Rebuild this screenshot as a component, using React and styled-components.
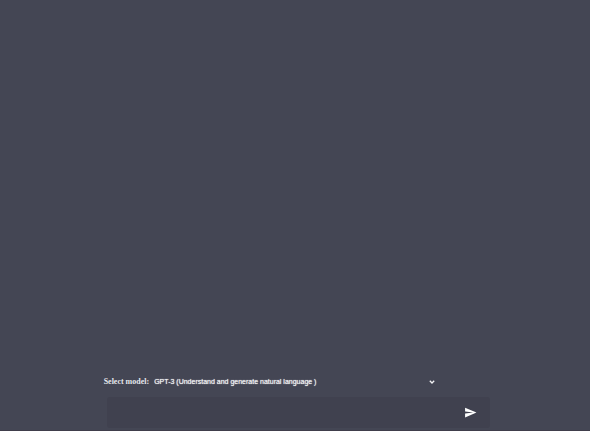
import React, { useState } from "react";
import styled, { createGlobalStyle } from "styled-components";

const GlobalStyle = createGlobalStyle`
  *, *::before, *::after { box-sizing: border-box; }
  body { margin: 0; background: #444654; }
`;

const Page = styled.main`
  display: flex;
  flex-direction: column;
  justify-content: flex-end;
  min-height: 100vh;
  padding-left: 4px;
  border-bottom: 1px solid #403e4b;
  background: #444654;
  color: #f4f4f6;
`;

const Messages = styled.section`
  flex: 1;
`;

const Footer = styled.footer`
  display: flex;
  flex-direction: column;
  gap: 7px;
  width: 66%;
  margin: 0 auto;
  padding-bottom: 2px;
`;

const ModelRow = styled.div`
  display: flex;
  align-items: center;
  gap: 5px;
  height: 16px;
`;

const ModelLabel = styled.label`
  color: #e4e6ec;
  font: bold 8px/16px "Liberation Serif", serif;
  white-space: nowrap;
`;

const SelectField = styled.div`
  display: grid;
  align-items: center;
  width: 281px;
`;

const ModelSelect = styled.select`
  grid-area: 1 / 1;
  width: 100%;
  height: 16px;
  padding: 0;
  border: 0;
  appearance: none;
  background: transparent;
  color: inherit;
  font: 7px/16px "Liberation Sans", sans-serif;
  text-shadow: 0 0 1px currentColor;

  option { color: #222; }
`;

const Chevron = styled.svg`
  grid-area: 1 / 1;
  justify-self: end;
  width: 6px;
  height: 4px;
  pointer-events: none;
`;

const Composer = styled.form`
  display: flex;
  align-items: center;
  height: 31px;
  margin-left: 3px;
  padding-right: 13px;
  background: #40414f;
  border-radius: 3px;
`;

const PromptInput = styled.input`
  flex: 1;
  min-width: 0;
  height: 100%;
  padding: 0 10px;
  border: 0;
  outline: 0;
  background: transparent;
  color: inherit;
  font: 12px/16px "Liberation Sans", sans-serif;
`;

const SendButton = styled.button`
  display: flex;
  padding: 0;
  border: 0;
  background: transparent;
  color: #fff;
  cursor: pointer;
`;

export default function App() {
  const [prompt, setPrompt] = useState("");
  return (
    <Page>
      <GlobalStyle />
      <Messages aria-label="Conversation" />
      <Footer>
        <ModelRow>
          <ModelLabel htmlFor="model">Select model:</ModelLabel>
          <SelectField>
            <ModelSelect id="model">
              <option>GPT-3 (Understand and generate natural language )</option>
            </ModelSelect>
            <Chevron viewBox="0 0 6 4" fill="none" stroke="currentColor" strokeWidth="1.3" aria-hidden="true">
              <path d="M0.8 0.8 3 3 5.2 0.8" />
            </Chevron>
          </SelectField>
        </ModelRow>
        <Composer onSubmit={(e) => e.preventDefault()}>
          <PromptInput aria-label="Message" value={prompt} onChange={(e) => setPrompt(e.target.value)} />
          <SendButton type="submit" aria-label="Send message">
            <svg width="13" height="13" viewBox="0 0 24 24" fill="currentColor" aria-hidden="true">
              <path d="M2.01 21 23 12 2.01 3 2 10l15 2-15 2z" />
            </svg>
          </SendButton>
        </Composer>
      </Footer>
    </Page>
  );
}
